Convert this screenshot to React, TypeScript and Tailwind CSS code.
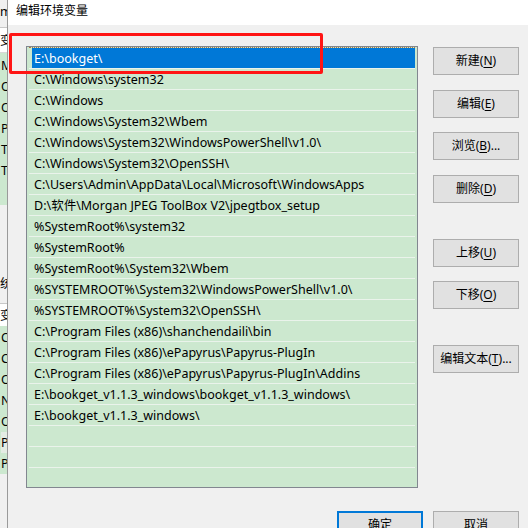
import React from "react";

const paths = [
  "E:\\bookget\\",
  "C:\\Windows\\system32",
  "C:\\Windows",
  "C:\\Windows\\System32\\Wbem",
  "C:\\Windows\\System32\\WindowsPowerShell\\v1.0\\",
  "C:\\Windows\\System32\\OpenSSH\\",
  "C:\\Users\\Admin\\AppData\\Local\\Microsoft\\WindowsApps",
  "D:\\软件\\Morgan JPEG ToolBox V2\\jpegtbox_setup",
  "%SystemRoot%\\system32",
  "%SystemRoot%",
  "%SystemRoot%\\System32\\Wbem",
  "%SYSTEMROOT%\\System32\\WindowsPowerShell\\v1.0\\",
  "%SYSTEMROOT%\\System32\\OpenSSH\\",
  "C:\\Program Files (x86)\\shanchendaili\\bin",
  "C:\\Program Files (x86)\\ePapyrus\\Papyrus-PlugIn",
  "C:\\Program Files (x86)\\ePapyrus\\Papyrus-PlugIn\\Addins",
  "E:\\bookget_v1.1.3_windows\\bookget_v1.1.3_windows\\",
  "E:\\bookget_v1.1.3_windows\\",
  "",
  "",
  "",
];

const userVars = ["M", "O", "O", "Pa", "TE", "TM"];
const sysVars = ["CM", "Co", "Or", "N", "OS", "Pa", "PA"];

function Btn({ label, mn, tail, className = "" }: { label: string; mn: string; tail?: string; className?: string }) {
  return (
    <div
      className={`w-[86px] h-[28px] shrink-0 flex items-center justify-center border border-[#adadad] bg-[#e1e1e1] text-[12px] text-black ${className}`}
    >
      {label}(<span className="underline underline-offset-2">{mn}</span>){tail}
    </div>
  );
}

export default function App() {
  return (
    <div
      className="relative w-[528px] h-[528px] overflow-hidden flex bg-[#f0f0f0] text-[12px] text-black"
      style={{ fontFamily: '"Noto Sans", "Noto Sans CJK SC", sans-serif' }}
    >
      {/* window behind */}
      <div className="w-[7px] shrink-0 flex flex-col overflow-hidden whitespace-nowrap leading-[21px] text-[12.5px]">
        <div className="h-[27px] bg-[#f0f0f0] flex items-center pb-[4px]">m</div>
        <div className="h-[25px] bg-white border-t border-[#c8c8c8] flex items-center">变</div>
        <div className="h-[153px] bg-[#cce8cf] border-t border-[#d8d8d8] pt-[2px] pl-[1px]">
          {userVars.map((v, i) => (
            <div key={i} className="h-[21px]">{v}</div>
          ))}
        </div>
        <div className="h-[98px] flex flex-col justify-end pb-[9px]">统</div>
        <div className="h-[23px] bg-white border-t border-[#c8c8c8] flex items-center">变</div>
        <div className="h-[148px] bg-[#cce8cf] pt-[1px] pl-[1px]">
          {sysVars.map((v, i) => (
            <div key={i} className={`h-[21px] ${v === "Pa" ? "bg-[#e4ece4]" : ""}`}>{v}</div>
          ))}
        </div>
      </div>

      {/* dialog */}
      <div className="flex-1 flex flex-col border-l border-[#9a9a9a] min-w-0">
        <div className="h-[25px] shrink-0 bg-white flex items-center pl-[8px] pb-[4px] text-[12px]">编辑环境变量</div>

        <div className="flex pl-[18px] pt-[21px]">
          <div className="w-[392px] h-[442px] shrink-0 border border-[#828790] bg-[#cce8cf] overflow-hidden px-[2px] whitespace-nowrap text-[12.5px]">
            {paths.map((p, i) =>
              i === 0 ? (
                <div key={i} className="h-[21px] border-t border-dotted border-[#b07a40] pl-[3px]">
                  <div className="h-[20px] bg-[#0078d7] text-white pl-[2px] leading-[22px]">{p}</div>
                </div>
              ) : (
                <div key={i} className="h-[21px] border-t border-[#eaf3eb] pl-[5px] leading-[22px]">
                  {p}
                </div>
              )
            )}
          </div>

          <div className="flex flex-col ml-[15px] pt-[1px]">
            <Btn label="新建" mn="N" />
            <Btn label="编辑" mn="E" className="mt-[15px]" />
            <Btn label="浏览" mn="B" tail="..." className="mt-[14px]" />
            <Btn label="删除" mn="D" className="mt-[15px]" />
            <Btn label="上移" mn="U" className="mt-[36px]" />
            <Btn label="下移" mn="O" className="mt-[14px]" />
            <Btn label="编辑文本" mn="T" tail="..." className="mt-[36px]" />
          </div>
        </div>

        <div className="flex justify-end gap-[10px] pr-[9px] mt-[23px]">
          <div className="w-[86px] h-[28px] border-2 border-[#0078d7] bg-[#e1e1e1] flex items-center justify-center">确定</div>
          <div className="w-[86px] h-[28px] border border-[#adadad] bg-[#e1e1e1] flex items-center justify-center">取消</div>
        </div>
      </div>

      {/* red highlight drawn over the screenshot */}
      <div className="absolute left-[9px] top-[33px] w-[314px] h-[41px] border-[3px] border-[#ff1515] rounded-[2px] pointer-events-none" />
    </div>
  );
}
